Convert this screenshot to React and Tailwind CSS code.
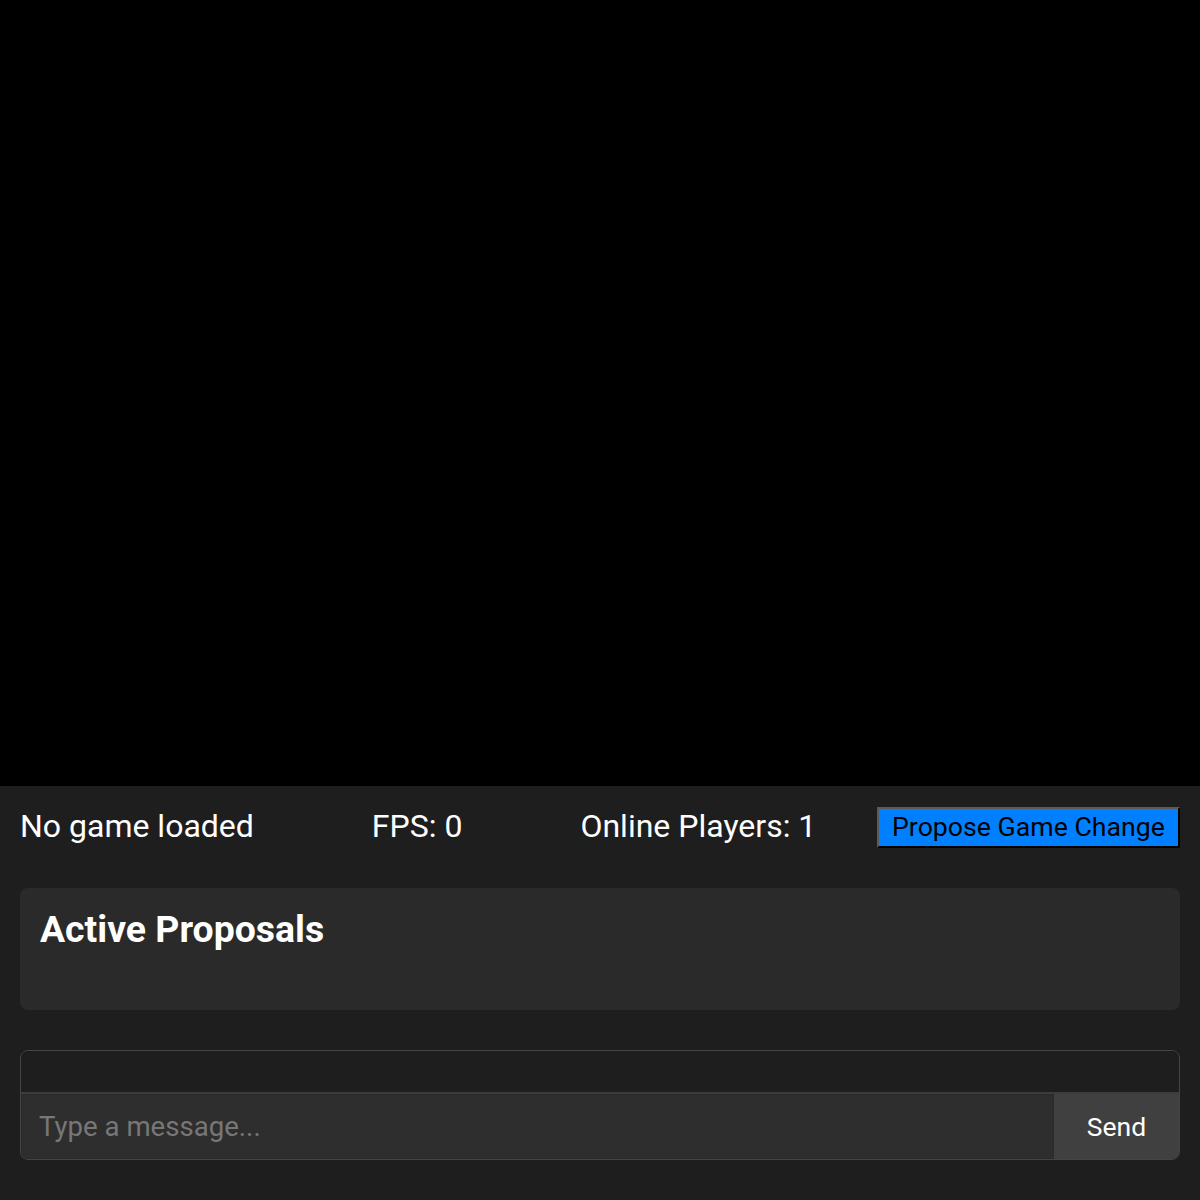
export default function App() {
  return (
    <div className="w-[1200px] h-[1200px] flex flex-col bg-[#1e1e1e] text-white" style={{ fontFamily: 'Roboto, "Noto Sans", sans-serif' }}>
      <div className="h-[786px] bg-black shrink-0" />
      <div className="flex-1 flex flex-col px-5 pt-5 gap-10">
        <div className="flex items-center h-[42px]">
          <span className="text-[32px] leading-none pb-[2px]">No game loaded</span>
          <span className="text-[32px] leading-none pb-[2px] ml-[118px]">FPS: 0</span>
          <span className="text-[32px] leading-none pb-[2px] ml-[118px]">Online Players: 1</span>
          <button className="ml-auto h-[41px] w-[303px] bg-[#0080ff] text-black text-[26.7px] leading-none border-[2px] border-t-[#5a5a5a] border-l-[#5a5a5a] border-b-black border-r-black">
            Propose Game Change
          </button>
        </div>
        <div className="h-[122px] bg-[#2a2a2a] rounded-lg px-5 pt-5">
          <h2 className="text-[37.4px] font-bold leading-[42px]">Active Proposals</h2>
        </div>
        <div className="h-[110px] border border-[#454545] rounded-lg overflow-hidden flex flex-col">
          <div className="h-[43px] shrink-0 bg-[#1e1e1e] border-b-2 border-[#3c3c3c]" />
          <div className="flex flex-1">
            <input
              placeholder="Type a message..."
              className="flex-1 bg-[#2e2e2e] border border-[#2a2a2a] px-[17px] text-[27.6px] text-white placeholder-[#777] outline-none"
              style={{ fontFamily: 'Roboto, sans-serif' }}
            />
            <button className="w-[125px] bg-[#404040] text-[26.5px] text-white">Send</button>
          </div>
        </div>
      </div>
    </div>
  );
}
